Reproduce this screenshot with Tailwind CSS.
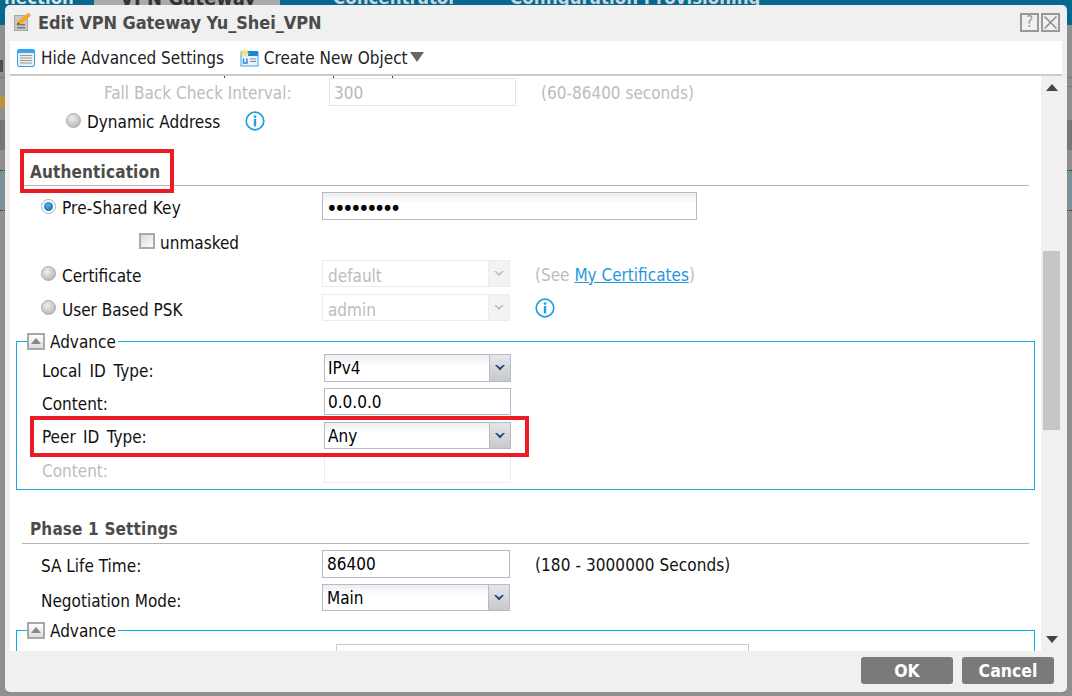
<!DOCTYPE html>
<html lang="en">
<head>
<meta charset="utf-8">
<title>Edit VPN Gateway</title>
<script src="https://cdn.jsdelivr.net/npm/@tailwindcss/browser@4"></script>
</head>
<body class="w-[1072px] h-[696px] overflow-hidden relative bg-[#8f8f8f] font-['DejaVu_Sans_Condensed','DejaVu_Sans',sans-serif] text-[17px] text-[#111]">

<!-- page behind the dialog -->
<div class="h-[25px] bg-[#04688f] flex overflow-hidden text-[#c9d6dc] font-bold text-[18.5px] leading-[12px]">
  <div class="w-[94px] -mt-[8px] pl-[4px] text-[#d8e0e4]">nection</div>
  <div class="w-[186px] bg-[#a9a9a9] text-[#333] text-[20px] pl-[26px]"><span class="block -mt-[8px]">VPN Gateway</span></div>
  <div class="ml-[53px] -mt-[8px] w-[177px]">Concentrator</div>
  <div class="-mt-[8px]">Configuration Provisioning</div>
</div>
<div class="absolute left-0 top-[60px] w-[3px] h-[12px] bg-[#5b4a42]"></div>
<div class="absolute left-0 top-[77px] w-[5px] h-px bg-[#777]"></div>
<div class="absolute left-0 top-[96px] w-[5px] h-[12px] bg-[#b8963c]"></div>
<div class="absolute left-0 top-[120px] w-[5px] h-[30px] bg-[#777]"></div>
<div class="absolute left-0 top-[170px] w-[5px] h-[41px] bg-[#7e8f9c] border-y border-dotted border-[#333]"></div>
<div class="absolute right-0 top-[77px] w-[5px] h-px bg-[#777]"></div>
<div class="absolute right-0 top-[86px] w-[5px] h-px bg-[#777]"></div>
<div class="absolute right-0 top-[120px] w-[5px] h-[30px] bg-[#777]"></div>
<div class="absolute right-0 top-[170px] w-[5px] h-[41px] bg-[#7e8f9c] border-y border-dotted border-[#333]"></div>

<!-- dialog -->
<div class="absolute left-[5px] top-[5px] w-[1062px] h-[687px] bg-[#f0f0f0] rounded-[5px] flex flex-col">
  <!-- title -->
  <div class="h-[36px] flex items-center pl-[9px] pr-[7px] shrink-0">
    <svg width="17" height="19" viewBox="0 0 17 19" class="shrink-0 -mt-[1px]">
      <rect x="0.5" y="2.5" width="13" height="15" fill="#c8c8c8" stroke="#a8a8a8"/>
      <rect x="3" y="11" width="8" height="1.5" fill="#777"/><rect x="3" y="14" width="8" height="1.5" fill="#777"/>
      <path d="M3 12 L4 8 L13 0.8 L16 3.5 L7 11 Z" fill="#f5a81c"/>
      <path d="M13 0.8 L14.5 0 L16.8 2 L16 3.5 Z" fill="#e88a9a"/>
      <path d="M3 12 L4 9.5 L5.5 11 Z" fill="#333"/>
    </svg>
    <div class="ml-[7px] font-bold text-[18px] tracking-[-0.07px] text-[#4b4b4b] leading-none">Edit VPN Gateway Yu_Shei_VPN</div>
    <div class="ml-auto flex gap-[2px] -mt-[1px]">
      <div class="w-[19px] h-[19px] border-2 border-[#999] text-[#999] flex items-center justify-center text-[15px] leading-none">?</div>
      <div class="w-[19px] h-[19px] border-2 border-[#999] flex items-center justify-center">
        <svg width="15" height="15" viewBox="0 0 15 15"><path d="M1.5 1.5 L13.5 13.5 M13.5 1.5 L1.5 13.5" stroke="#8f8f8f" stroke-width="1.6"/></svg>
      </div>
    </div>
  </div>

  <!-- toolbar -->
  <div class="h-[35px] ml-[5px] mr-[5px] bg-white border-b-2 border-[#cbcbcb] flex items-center shrink-0">
    <svg width="18" height="18" viewBox="0 0 18 18" class="ml-[7px] shrink-0">
      <rect x="0.5" y="0.5" width="17" height="17" rx="1.5" fill="#eee" stroke="#2ea4f0"/>
      <rect x="1" y="1" width="16" height="3" fill="#3aa6f2"/>
      <path d="M3 6.5 H15 M3 9 H15 M3 11.5 H15 M3 14 H15" stroke="#9a9a9a" stroke-width="1.2"/>
    </svg>
    <span class="ml-[6px] text-[#222] leading-none mt-[1px]">Hide Advanced Settings</span>
    <svg width="19" height="19" viewBox="0 0 19 19" class="ml-[16px] shrink-0">
      <rect x="1" y="4" width="17" height="14" fill="#e9f3fb" stroke="#3aa6f2"/>
      <rect x="8" y="3" width="10" height="5" fill="#1f84dc"/>
      <path d="M10 11 H16 M10 13.5 H16" stroke="#888" stroke-width="1.2"/>
      <path d="M3.5 10.5 V15 H7 V10.5" fill="none" stroke="#2288dd" stroke-width="1.4"/>
      <path d="M4.5 0 L5.5 3 L8.5 1.5 L6.8 4.3 L9.5 5.5 L6.5 6.2 L7 9 L4.5 7 L2 9 L2.5 6.2 L0 5.5 L2.5 4.3 L1 1.5 L3.5 3 Z" fill="#f7e36a"/>
    </svg>
    <span class="ml-[5px] text-[#222] leading-none mt-[1px]">Create New Object</span>
    <svg width="14" height="10" viewBox="0 0 14 10" class="ml-[2px] -mt-[2px]"><path d="M0 0 H14 L7 10 Z" fill="#666"/></svg>
  </div>

  <!-- body -->
  <div class="h-[575px] ml-[5px] mr-[5px] flex shrink-0">
    <div class="w-[1031px] bg-white relative overflow-hidden">

      <!-- clipped row above -->
      <div class="h-[2px] relative">
        <span class="absolute left-[214px] top-0 w-px h-[2px] bg-[#444]"></span>
        <span class="absolute left-[323px] top-0 w-px h-[2px] bg-[#444]"></span>
        <span class="absolute left-[382px] top-0 w-px h-[2px] bg-[#444]"></span>
      </div>

      <div class="h-[28px] flex items-center pl-[94px]">
        <span class="w-[225px] mt-[4px] text-[#bcbcbc]">Fall Back Check Interval:</span>
        <div class="w-[187px] h-[28px] border border-[#e4e4e4] flex items-center pl-[4px] pt-[4px] text-[#b8b8b8]">300</div>
        <span class="ml-[25px] mt-[4px] text-[#bcbcbc]">(60-86400 seconds)</span>
      </div>

      <div class="h-[28px] mt-px flex items-center pl-[56px]">
        <span class="w-[15px] h-[15px] -mt-[2px] rounded-full border border-[#aaa] bg-[radial-gradient(circle_at_40%_35%,#eee,#aaa)]"></span>
        <span class="ml-[6px] mt-[4px]">Dynamic Address</span>
        <svg width="20" height="20" viewBox="0 0 20 20" class="ml-[25px]"><circle cx="10" cy="10" r="8.8" fill="#fff" stroke="#1fa0e0" stroke-width="1.7"/><circle cx="10" cy="5.6" r="1.4" fill="#1fa0e0"/><rect x="8.8" y="8" width="2.4" height="7.4" fill="#1fa0e0"/></svg>
      </div>

      <!-- Authentication -->
      <div class="h-[30px] mt-[21px] ml-[12px] w-[1007px] border-b border-[#b5b5b5] pl-[8px] font-bold tracking-[0.15px] text-[#4b4b4b] flex items-center"><span class="mt-[4px]">Authentication</span></div>

      <div class="h-[28px] mt-[6px] flex items-center pl-[31px]">
        <span class="w-[15px] h-[15px] rounded-full border-[1.5px] border-[#aaa] bg-white flex items-center justify-center"><span class="w-[9px] h-[9px] rounded-full bg-[radial-gradient(circle_at_45%_35%,#57b4e8,#035a92)]"></span></span>
        <span class="ml-[6px] mt-[6px] w-[260px] tracking-[0.2px]">Pre-Shared Key</span>
        <div class="w-[375px] h-[28px] border border-[#b5b9cb] bg-gradient-to-b from-[#ececec] to-white to-40% flex items-center pl-[3px] pt-[6px] text-[22px] leading-none tracking-[-3.7px] text-black">•••••••••</div>
      </div>

      <div class="h-[26px] mt-[8px] flex items-center pl-[129px]">
        <span class="w-[16px] h-[16px] border-2 border-[#aaa] bg-gradient-to-br from-[#d8d8e2] to-white"></span>
        <span class="ml-[5px] mt-[6px]">unmasked</span>
      </div>

      <div class="h-[27px] mt-[6px] flex items-center pl-[31px]">
        <span class="w-[15px] h-[15px] rounded-full border border-[#aaa] bg-[radial-gradient(circle_at_40%_35%,#eee,#aaa)]"></span>
        <span class="ml-[6px] mt-[7px] w-[260px]">Certificate</span>
        <div class="w-[188px] h-[27px] border border-[#ececec] flex items-center">
          <span class="flex-1 pl-[5px] mt-[6px] text-[#bcbcbc]">default</span>
          <span class="w-[21px] h-full bg-[#f3f3f3] border-l border-[#ececec] flex items-center justify-center"><svg width="10" height="6" viewBox="0 0 10 6"><path d="M0 0 L5 5 L10 0 L8 0 L5 2.6 L2 0 Z" fill="#b8c0d4"/></svg></span>
        </div>
        <span class="ml-[25px] mt-[4px] text-[#bcbcbc]">(See <a class="text-[#1f97dc] underline">My Certificates</a>)</span>
      </div>

      <div class="h-[27px] mt-[7px] flex items-center pl-[31px]">
        <span class="w-[15px] h-[15px] rounded-full border border-[#aaa] bg-[radial-gradient(circle_at_40%_35%,#eee,#aaa)]"></span>
        <span class="ml-[6px] mt-[6px] w-[260px]">User Based PSK</span>
        <div class="w-[188px] h-[27px] border border-[#ececec] flex items-center">
          <span class="flex-1 pl-[5px] mt-[6px] text-[#bcbcbc]">admin</span>
          <span class="w-[21px] h-full bg-[#f3f3f3] border-l border-[#ececec] flex items-center justify-center"><svg width="10" height="6" viewBox="0 0 10 6"><path d="M0 0 L5 5 L10 0 L8 0 L5 2.6 L2 0 Z" fill="#b8c0d4"/></svg></span>
        </div>
        <svg width="20" height="20" viewBox="0 0 20 20" class="ml-[25px]"><circle cx="10" cy="10" r="8.8" fill="#fff" stroke="#1fa0e0" stroke-width="1.7"/><circle cx="10" cy="5.6" r="1.4" fill="#1fa0e0"/><rect x="8.8" y="8" width="2.4" height="7.4" fill="#1fa0e0"/></svg>
      </div>

      <!-- Advance fieldset 1 -->
      <fieldset class="mt-[11px] ml-[6px] w-[1019px] h-[158px] border border-[#1aa7e8] pb-0">
        <legend class="ml-[10px] h-[18px] pr-[2px] flex items-center">
          <span class="w-[18px] h-[17px] border-2 border-[#a8a8a8] bg-gradient-to-b from-white to-[#ddd] flex items-center justify-center"><svg width="10" height="6" viewBox="0 0 10 6"><path d="M0 6 L5 0 L10 6 Z" fill="#888"/></svg></span>
          <span class="ml-[5px] mt-[4px]">Advance</span>
        </legend>
        <div class="h-[28px] mt-[4px] flex items-center pl-[25px]">
          <span class="w-[282px] mt-[8px] [word-spacing:3px]">Local ID Type:</span>
          <div class="w-[187px] h-[28px] border border-[#b5b9cb] flex items-center bg-gradient-to-b from-[#eee] to-white to-40%">
            <span class="flex-1 pl-[3px] mt-[2px] text-black">IPv4</span>
            <span class="w-[21px] h-full bg-gradient-to-b from-[#e4e6ea] to-[#c9c9c9] border-l border-[#b5b9cb] flex items-center justify-center"><svg width="10" height="6" viewBox="0 0 10 6"><path d="M0 0 L5 5.5 L10 0 L8 0 L5 2.6 L2 0 Z" fill="#23457e"/></svg></span>
          </div>
        </div>
        <div class="h-[27px] mt-[6px] flex items-center pl-[25px]">
          <span class="w-[282px] mt-[7px]">Content:</span>
          <div class="w-[187px] h-[27px] border border-[#b5b9cb] flex items-center pl-[3px] pt-[2px] text-black">0.0.0.0</div>
        </div>
        <div class="h-[27px] mt-[7px] flex items-center pl-[25px]">
          <span class="w-[282px] mt-[5px] [word-spacing:2.5px]">Peer ID Type:</span>
          <div class="w-[187px] h-[27px] border border-[#b5b9cb] flex items-center bg-gradient-to-b from-[#eee] to-white to-40%">
            <span class="flex-1 pl-[3px] mt-[2px] text-black">Any</span>
            <span class="w-[21px] h-full bg-gradient-to-b from-[#e4e6ea] to-[#c9c9c9] border-l border-[#b5b9cb] flex items-center justify-center"><svg width="10" height="6" viewBox="0 0 10 6"><path d="M0 0 L5 5.5 L10 0 L8 0 L5 2.6 L2 0 Z" fill="#23457e"/></svg></span>
          </div>
        </div>
        <div class="h-[27px] mt-[7px] flex items-center pl-[25px]">
          <span class="w-[282px] mt-[4px] text-[#bcbcbc]">Content:</span>
          <div class="w-[187px] h-[27px] border border-[#ececec]"></div>
        </div>
      </fieldset>

      <!-- Phase 1 -->
      <div class="h-[30px] mt-[24px] ml-[12px] w-[1007px] border-b border-[#b5b5b5] pl-[8px] font-bold tracking-[0.15px] text-[#4b4b4b] flex items-center"><span class="mt-[2px]">Phase 1 Settings</span></div>

      <div class="h-[28px] mt-[6px] flex items-center pl-[31px]">
        <span class="w-[281px] mt-[6px]">SA Life Time:</span>
        <div class="w-[188px] h-[28px] border border-[#b5b9cb] flex items-center pl-[4px] pt-[2px] text-black">86400</div>
        <span class="ml-[25px] mt-[4px] tracking-[0.08px]">(180 - 3000000 Seconds)</span>
      </div>

      <div class="h-[27px] mt-[6px] flex items-center pl-[31px]">
        <span class="w-[281px] mt-[9px]">Negotiation Mode:</span>
        <div class="w-[188px] h-[27px] border border-[#b5b9cb] flex items-center bg-gradient-to-b from-[#eee] to-white to-40%">
          <span class="flex-1 pl-[4px] mt-[2px] text-black">Main</span>
          <span class="w-[21px] h-full bg-gradient-to-b from-[#e4e6ea] to-[#c9c9c9] border-l border-[#b5b9cb] flex items-center justify-center"><svg width="10" height="6" viewBox="0 0 10 6"><path d="M0 0 L5 5.5 L10 0 L8 0 L5 2.6 L2 0 Z" fill="#23457e"/></svg></span>
        </div>
      </div>

      <!-- Advance fieldset 2 (clipped) -->
      <fieldset class="mt-[10px] ml-[6px] w-[1019px] h-[120px] border border-[#00b0f0]">
        <legend class="ml-[10px] h-[18px] pr-[2px] flex items-center">
          <span class="w-[18px] h-[17px] border-2 border-[#a8a8a8] bg-gradient-to-b from-white to-[#ddd] flex items-center justify-center"><svg width="10" height="6" viewBox="0 0 10 6"><path d="M0 6 L5 0 L10 6 Z" fill="#888"/></svg></span>
          <span class="ml-[5px] mt-[4px]">Advance</span>
        </legend>
        <div class="ml-[319px] mt-[5px] w-[413px] h-[27px] border border-[#c8c8c8]"></div>
      </fieldset>

      <!-- red annotation boxes -->
      <div class="absolute left-[10px] top-[73px] w-[154px] h-[44px] border-[4px] border-[#ed1c24]"></div>
      <div class="absolute left-[20px] top-[340px] w-[499px] h-[41px] border-[4px] border-[#ed1c24]"></div>
    </div>

    <!-- scrollbar -->
    <div class="flex-1 bg-[#f0f0f0] relative">
      <svg width="12" height="7" viewBox="0 0 12 7" class="absolute left-[5px] top-[8px]"><path d="M0 7 L6 0 L12 7 Z" fill="#444"/></svg>
      <div class="absolute left-[2px] top-[175px] w-[17px] h-[179px] bg-[#c6c6c6]"></div>
      <svg width="12" height="7" viewBox="0 0 12 7" class="absolute left-[5px] top-[560px]"><path d="M0 0 L6 7 L12 0 Z" fill="#444"/></svg>
    </div>
  </div>

  <!-- footer -->
  <div class="flex-1 flex justify-end items-start pt-[6px] pr-[13px] gap-[9px]">
    <button class="w-[92px] h-[27px] rounded-[3px] bg-[#7a7a7a] text-white font-bold text-[17.5px] leading-none pt-[2px]">OK</button>
    <button class="w-[92px] h-[27px] rounded-[3px] bg-[#7a7a7a] text-white font-bold text-[17.5px] leading-none pt-[2px]">Cancel</button>
  </div>
</div>
</body>
</html>
